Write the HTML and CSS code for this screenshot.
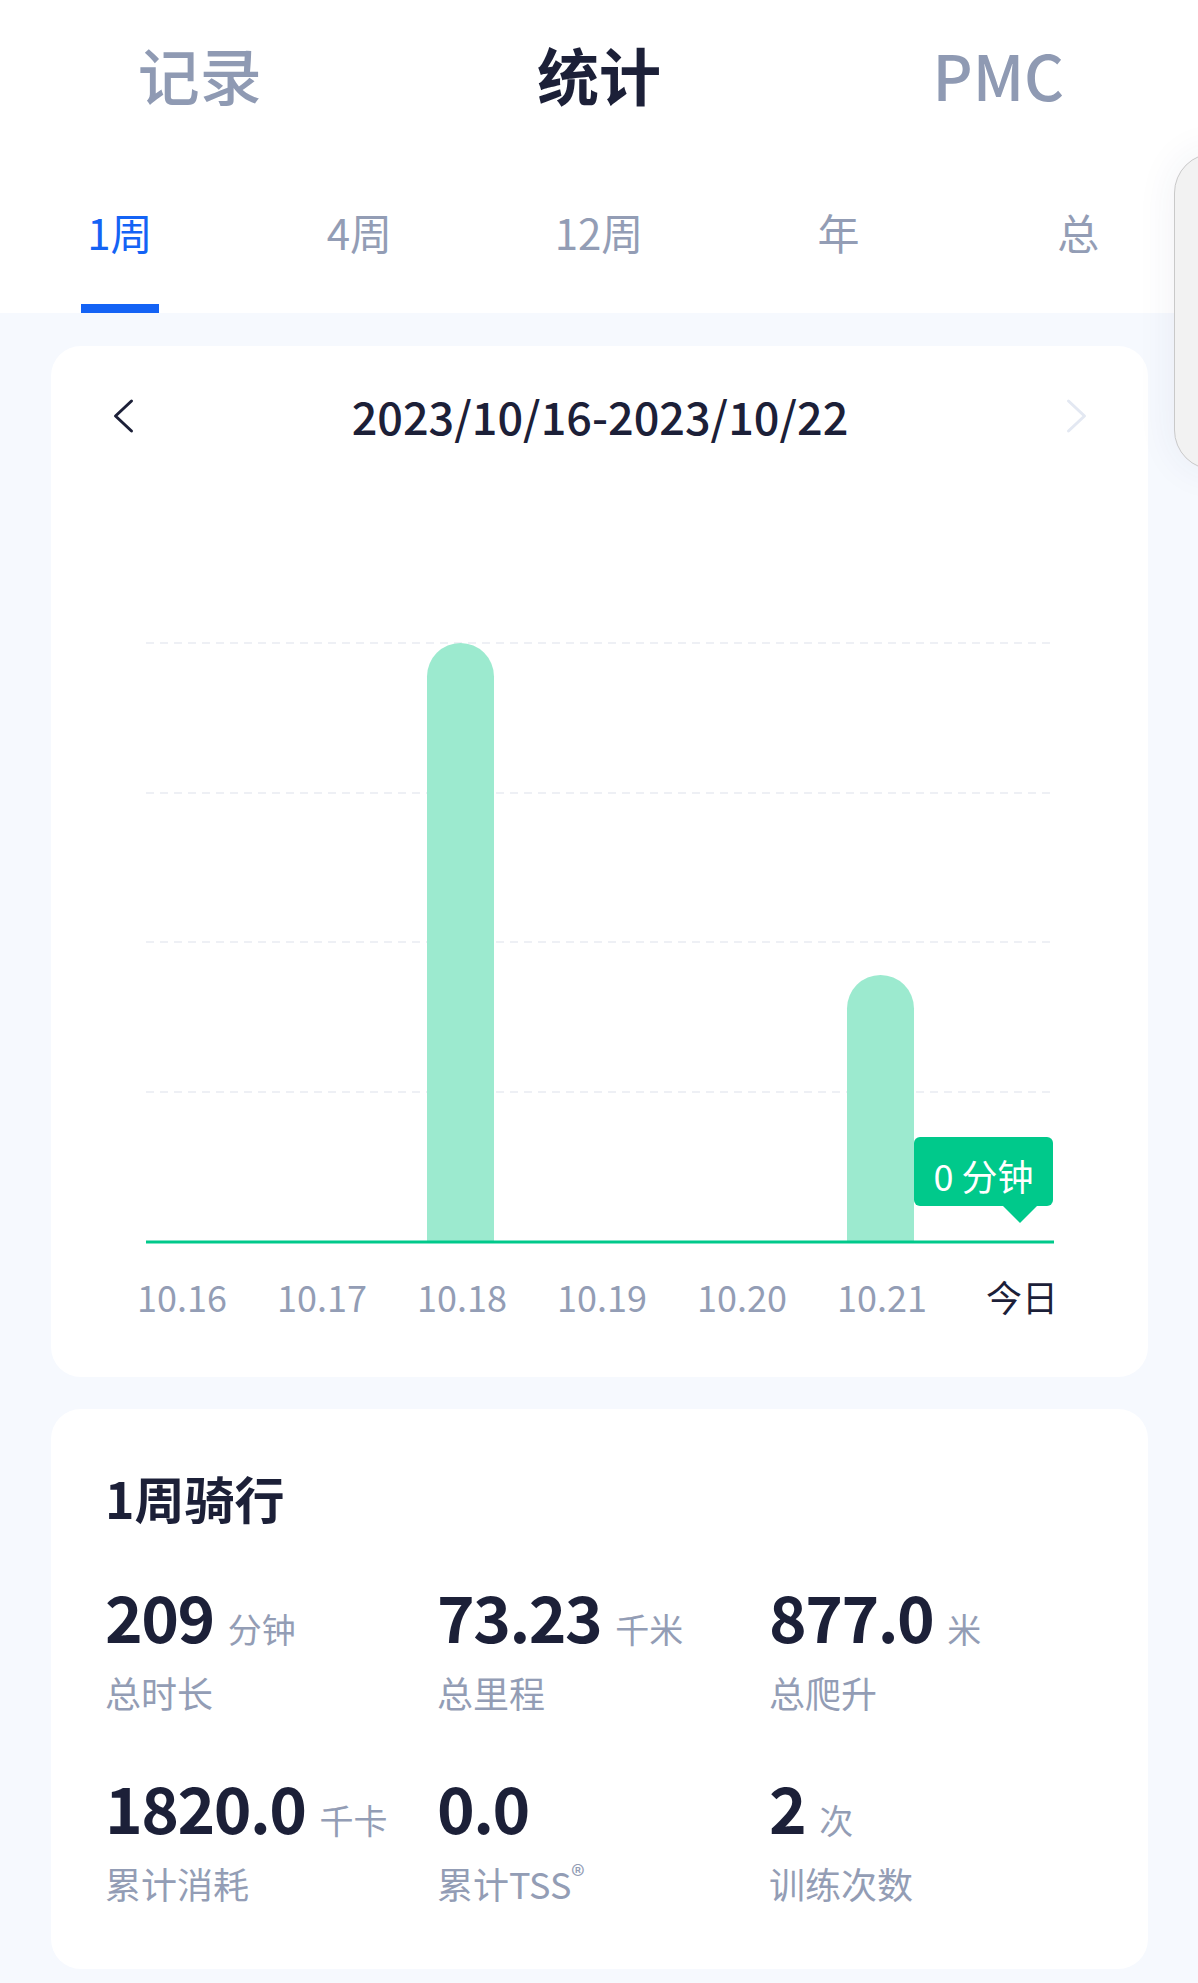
FILE: index.html
```html
<!DOCTYPE html>
<html>
<head>
    <title>统计</title>
    <link rel="stylesheet" href="styles.css">
</head>
<body>
    <header class="header">
        <nav class="top-tabs">
            <a class="top-tab">记录</a>
            <a class="top-tab active">统计</a>
            <a class="top-tab">PMC</a>
        </nav>
        <nav class="sub-tabs">
            <div class="sub-tab active"><span>1周</span><i class="indicator"></i></div>
            <div class="sub-tab"><span>4周</span></div>
            <div class="sub-tab"><span>12周</span></div>
            <div class="sub-tab"><span>年</span></div>
            <div class="sub-tab"><span>总</span></div>
        </nav>
    </header>

    <!-- floating side handle -->
    <div class="side-handle"></div>

    <section class="card chart-card">
        <div class="range">
            <svg class="chev" width="24" height="36" viewBox="0 0 24 36">
                <path d="M19.5 3 L3.5 18 L19.5 33" fill="none" stroke="#1c2038" stroke-width="3" stroke-linecap="round" stroke-linejoin="round"/>
            </svg>
            <span class="range-text">2023/10/16-2023/10/22</span>
            <svg class="chev" width="24" height="36" viewBox="0 0 24 36">
                <path d="M4.5 3 L20.5 18 L4.5 33" fill="none" stroke="#e3e8f2" stroke-width="3" stroke-linecap="round" stroke-linejoin="round"/>
            </svg>
        </div>

        <div class="chart">
            <svg class="plot" width="980" height="602" viewBox="0 0 980 602">
                <g stroke="#eef0f5" stroke-width="2" stroke-dasharray="8 6">
                    <line x1="34" y1="1" x2="942" y2="1"/>
                    <line x1="34" y1="151" x2="942" y2="151"/>
                    <line x1="34" y1="300" x2="942" y2="300"/>
                    <line x1="34" y1="450" x2="942" y2="450"/>
                </g>
                <path d="M315 600 V34.5 A33.5 33.5 0 0 1 382 34.5 V600 Z" fill="#9ceacf"/>
                <path d="M735 600 V366.5 A33.5 33.5 0 0 1 802 366.5 V600 Z" fill="#9ceacf"/>
                <line x1="34" y1="600" x2="942" y2="600" stroke="#00c98b" stroke-width="3"/>
            </svg>
            <div class="tip">0 分钟</div>
            <div class="axis">
                <span>10.16</span>
                <span>10.17</span>
                <span>10.18</span>
                <span>10.19</span>
                <span>10.20</span>
                <span>10.21</span>
                <span class="today">今日</span>
            </div>
        </div>
    </section>

    <section class="card summary-card">
        <h2 class="summary-title">1周骑行</h2>
        <div class="stats">
            <div class="stat">
                <div class="value">209<small>分钟</small></div>
                <div class="label">总时长</div>
            </div>
            <div class="stat">
                <div class="value">73.23<small>千米</small></div>
                <div class="label">总里程</div>
            </div>
            <div class="stat">
                <div class="value">877.0<small>米</small></div>
                <div class="label">总爬升</div>
            </div>
            <div class="stat">
                <div class="value">1820.0<small>千卡</small></div>
                <div class="label">累计消耗</div>
            </div>
            <div class="stat">
                <div class="value">0.0</div>
                <div class="label">累计TSS<sup>®</sup></div>
            </div>
            <div class="stat">
                <div class="value">2<small>次</small></div>
                <div class="label">训练次数</div>
            </div>
        </div>
    </section>
</body>
</html>
```

FILE: styles.css
```css
body {
    margin: 0;
    padding: 0;
    background-color: #f6f9fe;
    font-family: "Noto Sans CJK SC", "Noto Sans", sans-serif;
    color: #1c2038;
    position: relative;
    overflow: hidden;
}

.header {
    background-color: #fff;
}

.top-tabs {
    display: grid;
    grid-template-columns: repeat(3, 1fr);
    align-items: center;
    height: 147px;
    padding-bottom: 5px;
}

.top-tab {
    text-align: center;
    font-size: 62px;
    line-height: 1;
    font-weight: 500;
    color: #8f9ab3;
}

.top-tab.active {
    color: #1c2038;
    font-weight: 700;
}

.sub-tabs {
    display: grid;
    grid-template-columns: repeat(5, 1fr);
    height: 161px;
}

.sub-tab {
    display: flex;
    flex-direction: column;
    align-items: center;
}

.sub-tab span {
    margin-top: 50px;
    font-size: 42px;
    line-height: 60px;
    color: #939db5;
}

.sub-tab.active span {
    color: #1463f5;
}

.indicator {
    display: block;
    width: 78px;
    height: 9px;
    margin-top: 42px;
    background-color: #1463f5;
}

.side-handle {
    position: absolute;
    top: 153px;
    left: 1174px;
    width: 80px;
    height: 315px;
    background-color: #f2f2f2;
    border: 1.5px solid #c9c9c9;
    border-radius: 40px;
    box-shadow: 0 0 40px rgba(40, 60, 120, 0.07);
}

.card {
    background-color: #fff;
    border-radius: 30px;
    margin: 0 50px 0 51px;
}

.chart-card {
    margin-top: 33px;
    padding: 40px 56px 57px 61px;
}

.range {
    display: flex;
    justify-content: space-between;
    align-items: center;
    height: 60px;
    padding-right: 4px;
}

.range-text {
    font-size: 45px;
    line-height: 60px;
    font-weight: 500;
}

.chart {
    position: relative;
    margin-top: 196px;
}

.plot {
    display: block;
}

.tip {
    position: absolute;
    left: 802px;
    top: 495px;
    width: 139px;
    height: 61px;
    padding-top: 8px;
    border-radius: 6px;
    background-color: #00c98b;
    color: #fff;
    font-size: 36px;
    line-height: 61px;
    text-align: center;
}

.tip::after {
    content: "";
    position: absolute;
    left: 89px;
    top: 69px;
    border-top: 17px solid #00c98b;
    border-left: 17px solid transparent;
    border-right: 17px solid transparent;
}

.axis {
    display: grid;
    grid-template-columns: repeat(7, 140px);
    margin-top: 28px;
    font-size: 36px;
    line-height: 48px;
    color: #939db5;
    text-align: center;
}

.axis .today {
    color: #1c2038;
}

.summary-card {
    margin-top: 32px;
    padding: 58px 54px 62px;
}

.summary-title {
    margin: 0;
    font-size: 50px;
    line-height: 60px;
    font-weight: 700;
}

.stats {
    display: grid;
    grid-template-columns: repeat(3, 332px);
    row-gap: 50px;
    margin-top: 48px;
}

.value {
    display: flex;
    align-items: baseline;
    font-size: 64px;
    letter-spacing: -1.5px;
    line-height: 80px;
    font-weight: 700;
    height: 80px;
}

.value small {
    margin-left: 14px;
    font-size: 34px;
    font-weight: 400;
    letter-spacing: 0;
    color: #939db5;
}

.label {
    margin-top: 13px;
    font-size: 36px;
    line-height: 48px;
    color: #939db5;
}

.label sup {
    font-size: 28px;
    line-height: 0;
}
```
